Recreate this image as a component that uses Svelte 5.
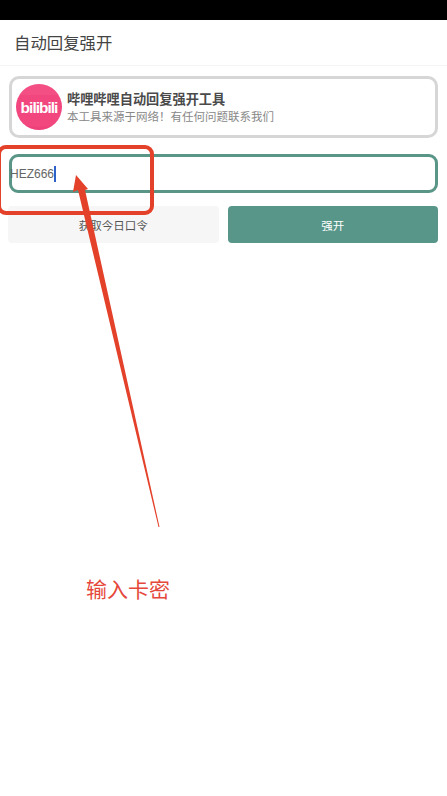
<script>
  let code = 'HEZ666';
</script>

<div class="page">
  <div class="statusbar"></div>
  <header class="title">自动回复强开</header>

  <main class="content">
    <section class="card">
      <div class="logo">
        <svg viewBox="0 0 46 46" width="46" height="46" aria-hidden="true">
          <defs>
            <clipPath id="round"><circle cx="23" cy="23" r="23" /></clipPath>
          </defs>
          <circle cx="23" cy="23" r="23" fill="#f2467f" />
          <g clip-path="url(#round)">
            <rect width="46" height="11" fill="#f66a98" opacity=".25" />
            <path d="M0 40q23 6 46 0v6H0z" fill="#e93a74" opacity=".5" />
          </g>
          <text x="23" y="29" text-anchor="middle" class="logo-text">bilibili</text>
        </svg>
      </div>
      <div class="info">
        <h1>哔哩哔哩自动回复强开工具</h1>
        <p>本工具来源于网络！有任何问题联系我们</p>
      </div>
    </section>

    <div class="field">
      <span class="value">{code}</span><span class="caret"></span>
    </div>

    <div class="actions">
      <button class="btn ghost">获取今日口令</button>
      <button class="btn primary">强开</button>
    </div>
  </main>

  <!-- annotation drawn on top of the screenshot -->
  <svg class="markup" viewBox="0 0 447 796" width="447" height="796" aria-hidden="true">
    <rect x="-1" y="147" width="153" height="66" rx="7" fill="none" stroke="#e4412a" stroke-width="4" />
    <path d="M76 175 L88 189 L85 190 L159.5 527 L158.5 527 L78 190 L73 192 Z" fill="#e4412a" />
  </svg>
  <div class="note">输入卡密</div>
</div>

<style>
  :global(body) {
    margin: 0;
    background: #fff;
  }

  .page {
    position: relative;
    width: 447px;
    height: 796px;
    overflow: hidden;
    font-family: "Noto Sans CJK SC", "Liberation Sans", sans-serif;
    color: #444;
  }

  .statusbar {
    height: 20px;
    background: #000;
  }

  .title {
    height: 46px;
    box-sizing: border-box;
    padding-left: 14px;
    line-height: 45px;
    font-size: 16.4px;
    color: #444;
    border-bottom: 1px solid #f5f5f5;
  }

  .content {
    padding: 10px 9px 0 9px;
  }

  .card {
    display: flex;
    align-items: center;
    gap: 5px;
    height: 62px;
    box-sizing: border-box;
    padding: 0 4px;
    border: 3px solid #d6d6d6;
    border-radius: 10px;
  }

  .logo {
    display: flex;
    flex: none;
  }

  .logo-text {
    font-family: "Liberation Sans", sans-serif;
    font-size: 15.5px;
    font-weight: 700;
    letter-spacing: -1px;
    fill: #fff;
  }

  .info {
    padding-bottom: 1px;
  }

  .info h1 {
    margin: 0;
    font-size: 13.2px;
    line-height: 18px;
    font-weight: 700;
    color: #4a4a4a;
  }

  .info p {
    margin: 0;
    font-size: 11.5px;
    line-height: 16px;
    color: #888;
  }

  .field {
    display: flex;
    align-items: center;
    height: 39px;
    box-sizing: border-box;
    margin-top: 16px;
    border: 3px solid #5a9688;
    border-radius: 9px;
    font-family: "Liberation Sans", sans-serif;
    font-size: 12px;
    color: #666;
  }

  .value {
    margin-left: -2px;
  }

  .caret {
    width: 1.5px;
    height: 16px;
    background: #2f62c8;
  }

  .actions {
    display: flex;
    gap: 9px;
    margin: 13px 0 0 -1px;
  }

  .btn {
    flex: 1;
    height: 37px;
    border: 0;
    padding: 0;
    border-radius: 4px;
    font-family: inherit;
    font-size: 11.5px;
  }

  .ghost {
    background: #f6f6f6;
    color: #555;
  }

  .primary {
    background: #579688;
    color: #fff;
  }

  .markup {
    position: absolute;
    left: 0;
    top: 0;
    pointer-events: none;
  }

  .note {
    position: absolute;
    left: 86px;
    top: 573px;
    font-size: 21px;
    line-height: 30px;
    color: #e5483a;
  }
</style>
